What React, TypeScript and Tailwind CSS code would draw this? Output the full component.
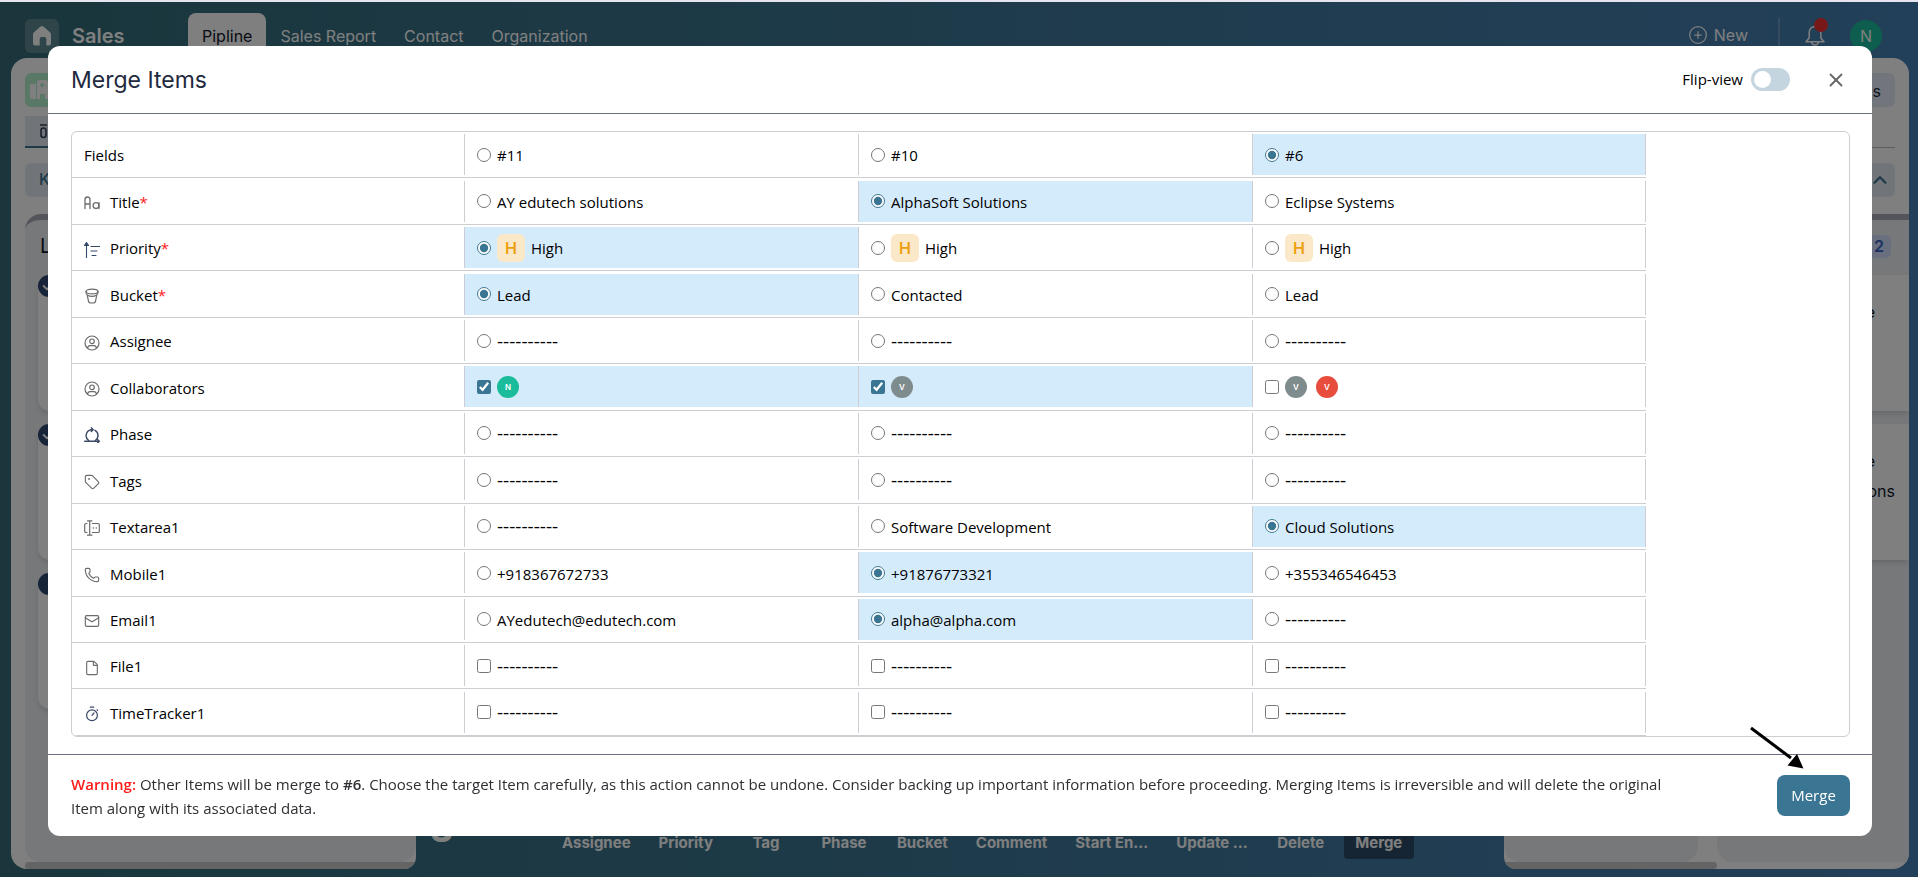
import { ReactNode, useState } from 'react';
import { Check, ChevronUp, CirclePlus, File, Mail, Phone, Tag, X } from 'lucide-react';

type Person = { initial: string; tone: 'green' | 'gray' | 'red' };

type Cell = {
  text?: string;
  priority?: boolean;
  people?: Person[];
};

type Row = {
  name: string;
  required?: boolean;
  icon?: ReactNode;
  type: 'radio' | 'checkbox';
  cells: Cell[];
  selected: number[];
};

const EMPTY = '----------';
const empty: Cell = { text: EMPTY };

const iconProps = {
  width: 16,
  height: 16,
  viewBox: '0 0 16 16',
  fill: 'none',
  strokeLinecap: 'round' as const,
  strokeLinejoin: 'round' as const,
  'aria-hidden': true,
};

const TitleIcon = () => (
  <svg {...iconProps} stroke="#6b6b6b" strokeWidth="1.3">
    <path d="M1 13.500V4.500a2.500 2.500 0 0 1 5 0v9M1 9h5" />
    <circle cx="12" cy="10.600" r="2.900" />
    <path d="M15 7.700v5.800" />
  </svg>
);

const PriorityIcon = () => (
  <svg {...iconProps} stroke="#33496b" strokeWidth="1.1">
    <path d="M2.500 15.500V2" />
    <path d="M.5 3.500 2.500.500l2 3z" fill="#33496b" />
    <path d="M7 4.500h9M7 9h6M8 13.500h4" />
  </svg>
);

const BucketIcon = () => (
  <svg {...iconProps} stroke="#6b6b6b" strokeWidth="1.2">
    <ellipse cx="8" cy="3.500" rx="6" ry="2.400" />
    <path d="M2 3.500c0 2.200.500 3.300 1.500 3.800 2.500 1.300 6.500 1.300 9 0 1-.5 1.500-1.600 1.500-3.800" />
    <path d="m3.300 7.300 1.200 6c.2 1 1.500 1.700 3.500 1.700s3.300-.7 3.500-1.700l1.200-6" />
  </svg>
);

const UserIcon = () => (
  <svg {...iconProps} stroke="#6b6b6b" strokeWidth="1.2">
    <circle cx="8" cy="8" r="7" />
    <circle cx="8" cy="6.300" r="2.300" />
    <path d="M3.500 13.200c.3-1.800 1.300-2.500 2.500-2.500h4c1.200 0 2.200.7 2.500 2.500" />
  </svg>
);

const PhaseIcon = () => (
  <svg {...iconProps} stroke="#3b4a66" strokeWidth="1.4">
    <path d="M.7 14.300H15M13.300 12.300l2 2-2 2" />
    <path d="M4.700 13.500A6 6 0 0 1 7 2.700h1.500M7.300.800l1.900 1.900-1.900 1.900" />
    <path d="M11 3.300a6 6 0 0 1 .3 10.200" />
  </svg>
);

const TextareaIcon = () => (
  <svg {...iconProps} stroke="#6b6b6b" strokeWidth="1.2">
    <path d="M5.700 1v14M3.500.800h4.400M3.500 15.200h4.400" />
    <path d="M3 3.500H2A1.300 1.300 0 0 0 .700 4.800v6.400A1.300 1.300 0 0 0 2 12.500h1" />
    <path d="M8.300 3.500H14a1.300 1.300 0 0 1 1.300 1.300v6.400a1.300 1.300 0 0 1-1.300 1.300H8.300" />
    <path d="M9.300 8h.01M12.300 8h.01" strokeWidth="1.600" />
  </svg>
);

const TimerIcon = () => (
  <svg {...iconProps} stroke="#3b4a66" strokeWidth="1.2">
    <circle cx="8" cy="9.300" r="5.400" />
    <path d="m8 9.300 2-2.300M6.300 1.200h3.400M13 3.800l.6.600" />
  </svg>
);

const grayIcon = 'size-4 text-[#6b6b6b]';

const rows: Row[] = [
  { name: 'Fields', type: 'radio', cells: [{ text: '#11' }, { text: '#10' }, { text: '#6' }], selected: [2] },
  {
    name: 'Title',
    required: true,
    icon: <TitleIcon />,
    type: 'radio',
    cells: [{ text: 'AY edutech solutions' }, { text: 'AlphaSoft Solutions' }, { text: 'Eclipse Systems' }],
    selected: [1],
  },
  {
    name: 'Priority',
    required: true,
    icon: <PriorityIcon />,
    type: 'radio',
    cells: [
      { text: 'High', priority: true },
      { text: 'High', priority: true },
      { text: 'High', priority: true },
    ],
    selected: [0],
  },
  {
    name: 'Bucket',
    required: true,
    icon: <BucketIcon />,
    type: 'radio',
    cells: [{ text: 'Lead' }, { text: 'Contacted' }, { text: 'Lead' }],
    selected: [0],
  },
  { name: 'Assignee', icon: <UserIcon />, type: 'radio', cells: [empty, empty, empty], selected: [] },
  {
    name: 'Collaborators',
    icon: <UserIcon />,
    type: 'checkbox',
    cells: [
      { people: [{ initial: 'N', tone: 'green' }] },
      { people: [{ initial: 'V', tone: 'gray' }] },
      {
        people: [
          { initial: 'V', tone: 'gray' },
          { initial: 'V', tone: 'red' },
        ],
      },
    ],
    selected: [0, 1],
  },
  { name: 'Phase', icon: <PhaseIcon />, type: 'radio', cells: [empty, empty, empty], selected: [] },
  {
    name: 'Tags',
    icon: <Tag className={grayIcon} strokeWidth={1.7} />,
    type: 'radio',
    cells: [empty, empty, empty],
    selected: [],
  },
  {
    name: 'Textarea1',
    icon: <TextareaIcon />,
    type: 'radio',
    cells: [empty, { text: 'Software Development' }, { text: 'Cloud Solutions' }],
    selected: [2],
  },
  {
    name: 'Mobile1',
    icon: <Phone className={grayIcon} strokeWidth={1.7} />,
    type: 'radio',
    cells: [{ text: '+918367672733' }, { text: '+91876773321' }, { text: '+355346546453' }],
    selected: [1],
  },
  {
    name: 'Email1',
    icon: <Mail className={grayIcon} strokeWidth={1.7} />,
    type: 'radio',
    cells: [{ text: 'AYedutech@edutech.com' }, { text: 'alpha@alpha.com' }, empty],
    selected: [1],
  },
  {
    name: 'File1',
    icon: <File className={grayIcon} strokeWidth={1.7} />,
    type: 'checkbox',
    cells: [empty, empty, empty],
    selected: [],
  },
  { name: 'TimeTracker1', icon: <TimerIcon />, type: 'checkbox', cells: [empty, empty, empty], selected: [] },
];

const tones = {
  green: 'bg-[#1abc9c]',
  gray: 'bg-[#7f8c8d]',
  red: 'bg-[#e74c3c]',
};

const actions = [
  'Assignee',
  'Priority',
  'Tag',
  'Phase',
  'Bucket',
  'Comment',
  'Start En...',
  'Update ...',
  'Delete',
  'Merge',
];

function TopBar() {
  const linkStyle = 'mt-[11px] h-12 rounded-t-lg px-3.5 text-base leading-[46px] font-normal';

  return (
    <header className="flex h-14 items-start pl-[25px] pr-9">
      <a href="#home" aria-label="Home" className="mt-[17px] flex size-[34px] items-center justify-center rounded-md bg-white/20">
        <svg width="20" height="20" viewBox="0 0 20 20" fill="white" aria-hidden="true">
          <path d="M8.300.8a2.600 2.600 0 0 1 3.400 0l6 5.200c.8.700 1.300 1.600 1.300 2.600V17a2.500 2.500 0 0 1-2.500 2.500h-2.200V13a2 2 0 0 0-2-2h-2.600a2 2 0 0 0-2 2v6.500H3.500A2.500 2.500 0 0 1 1 17V8.600C1 7.600 1.500 6.700 2.300 6z" />
        </svg>
      </a>
      <span className="ml-[13px] mt-5 w-[116px] text-xl font-semibold text-white">Sales</span>
      <nav className="flex h-14 items-start">
        <a href="#pipline" className={`${linkStyle} bg-white text-slate-900`}>
          Pipline
        </a>
        <a href="#report" className={`${linkStyle} text-white`}>
          Sales Report
        </a>
        <a href="#contact" className={`${linkStyle} text-white`}>
          Contact
        </a>
        <a href="#organization" className={`${linkStyle} text-white`}>
          Organization
        </a>
      </nav>
      <div className="ml-auto flex items-start">
        <button type="button" className="mt-[21px] flex items-center gap-1.5 text-base text-white">
          <CirclePlus className="size-5" strokeWidth={1.5} />
          New
        </button>
        <span className="ml-[30px] mt-4 h-9 w-0.5 bg-white/20" />
        <button type="button" aria-label="Notifications" className="relative ml-6 mt-[22px] text-white">
          <svg width="22" height="22" viewBox="0 0 22 22" fill="none" stroke="currentColor" strokeWidth="1.500" strokeLinejoin="round" aria-hidden="true">
            <path d="M11 2.500c-3.600 0-5.800 2.500-5.800 6V14L2 17.800h18L16.800 14V8.500c0-3.500-2.200-6-5.800-6zM7.500 18c.3 2 1.700 3 3.500 3s3.200-1 3.500-3" />
          </svg>
          <span className="absolute -top-1.5 left-2.5 size-3.5 rounded-full bg-[#f03232]" />
        </button>
        <span className="ml-6 mt-[18px] flex size-8 items-center justify-center rounded-full bg-[#1abc9c] text-base text-white">
          N
        </span>
      </div>
    </header>
  );
}

function TaskStub({ checked }: { checked: boolean }) {
  return (
    <div className="h-[136px] rounded-xl bg-white shadow-md">
      <span className="flex size-[22px] items-center justify-center rounded-full bg-[#2f4670] text-white">
        {checked && <Check className="size-4" strokeWidth={3} />}
      </span>
    </div>
  );
}

function BoardStart() {
  return (
    <section className="flex w-[405px] flex-col overflow-hidden rounded-t-2xl rounded-br-xl rounded-bl-2xl bg-white pl-3.5">
      <div className="mt-[15px] flex size-[34px] items-center justify-center rounded-md bg-[#b4f0cc] text-white">
        <svg width="24" height="22" viewBox="0 0 24 22" fill="currentColor" aria-hidden="true">
          <path d="M0 5h6v15H2a2 2 0 0 1-2-2zM19 8h3a2 2 0 0 1 2 2v10h-5z" />
          <path fillRule="evenodd" d="M10 1h5a3 3 0 0 1 3 3v16h-3v-5h-5v5H7V4a3 3 0 0 1 3-3zm1.500 3v1.500H10V7h1.500v1.500H13V7h1.500V5.500H13V4z" />
        </svg>
      </div>
      <div className="mt-[9px] flex h-8 items-center border-b-2 border-[#3a7593] bg-[#e2eaf2] pl-3.5 text-slate-700">
        <svg width="14" height="16" viewBox="0 0 14 16" fill="none" stroke="currentColor" strokeWidth="1.600" aria-hidden="true">
          <path d="M1 2h7" />
          <rect x="2" y="5" width="5" height="9.500" rx="2.500" />
        </svg>
      </div>
      <div className="mt-[15px] h-[34px] rounded-md bg-[#e2eaf2] pl-3.5 text-base leading-8 font-medium text-[#3a7593]">
        Kanban
      </div>
      <div className="mt-[17px] flex-1 rounded-2xl border-t-6 border-[#a6aab6] bg-[#eef0f4] pl-[13px]">
        <h2 className="h-[55px] pl-0.5 pt-3 text-xl font-normal text-slate-900">Lead</h2>
        <div className="flex flex-col gap-[13px]">
          <TaskStub checked />
          <TaskStub checked />
          <TaskStub checked={false} />
        </div>
      </div>
      <div className="h-[7px] rounded-l bg-[#c8c8c8]" />
    </section>
  );
}

function BoardEnd() {
  return (
    <section className="flex w-[405px] flex-col overflow-hidden rounded-t-2xl rounded-br-2xl rounded-bl-xl bg-white">
      <div className="mr-3.5 mt-[15px] h-[34px] rounded-md bg-[#e4ebf7] pr-3.5 text-right text-base leading-9 text-slate-800">
        Settings
      </div>
      <div className="mr-3.5 mt-[9px] h-8 border-b border-[#bbb]" />
      <div className="mr-3.5 mt-[15px] flex h-[34px] items-center justify-end rounded-md bg-[#e2eaf2] pr-1 text-[#3a7593]">
        <ChevronUp className="size-[22px]" strokeWidth={2.5} />
      </div>
      <div className="mt-[17px] flex flex-1 gap-[19px]">
        <div className="flex-1 rounded-2xl border-t-6 border-[#a6aab6] bg-[#eef0f4]" />
        <div className="w-[192px] rounded-tl-2xl rounded-bl-2xl border-t-6 border-[#a6aab6] bg-[#eef0f4]">
          <div className="flex h-[55px] justify-end pr-[18px] pt-[15px]">
            <span className="h-[23px] rounded-md bg-[#d2dfff] px-[7px] text-base leading-[23px] font-semibold text-[#3562c4]">2</span>
          </div>
          <div className="flex flex-col gap-[13px] text-base leading-[30px] text-slate-900">
            <div className="h-[136px] bg-white pl-[94px] pt-[22px] shadow-md">
              <p className="w-16 text-right">Phase</p>
            </div>
            <div className="h-[136px] bg-white pl-[94px] pt-[22px] shadow-md">
              <p className="w-16 text-right">Phase</p>
              <p className="w-[84px] text-right">Solutions</p>
            </div>
          </div>
        </div>
      </div>
      <div className="h-[7px] w-[213px] rounded-r bg-[#c8c8c8]" />
    </section>
  );
}

function ActionBar() {
  return (
    <div className="flex min-w-0 flex-1 items-end pb-2.5 pl-[14px]">
      <span className="mb-3 w-[122px] text-4xl leading-[36px] font-bold text-white">3</span>
      <div className="flex gap-2">
        {actions.map(action => (
          <button
            key={action}
            type="button"
            className={`h-12 min-w-[70px] rounded px-2.5 pt-4 text-[15px] leading-[18px] font-bold text-white ${
              action === 'Merge' ? 'bg-slate-800/60' : ''
            }`}
          >
            {action}
          </button>
        ))}
      </div>
    </div>
  );
}

function CellContent({ cell }: { cell: Cell }) {
  if (cell.people) {
    return (
      <span className="flex gap-[9px]">
        {cell.people.map((person, i) => (
          <span
            key={i}
            className={`flex size-[22px] items-center justify-center rounded-full font-[Inter,sans-serif] text-[8px] font-semibold text-white ${tones[person.tone]}`}
          >
            {person.initial}
          </span>
        ))}
      </span>
    );
  }

  return (
    <span className="flex items-center gap-[6px]">
      {cell.priority && (
        <span className="flex size-7 items-center justify-center rounded-md bg-[#fbe8c9] font-[Inter,sans-serif] text-base font-semibold text-[#ee9f0e]">
          H
        </span>
      )}
      <span className={cell.text === EMPTY ? 'text-[19px] leading-6' : 'pt-0.5'}>{cell.text}</span>
    </span>
  );
}

function MergeTable() {
  const [selection, setSelection] = useState(rows.map(row => row.selected));

  const toggle = (rowIndex: number, cellIndex: number) => {
    setSelection(prev =>
      prev.map((picked, i) => {
        if (i !== rowIndex) return picked;
        if (rows[i].type === 'radio') return [cellIndex];
        return picked.includes(cellIndex) ? picked.filter(p => p !== cellIndex) : [...picked, cellIndex];
      }),
    );
  };

  return (
    <table className="h-full w-[1574px] table-fixed border-collapse text-[15px] text-black">
      <colgroup>
        <col className="w-[392px]" />
        <col />
        <col />
        <col />
      </colgroup>
      <tbody>
        {rows.map((row, rowIndex) => (
          <tr key={row.name} className="border-b border-[#cdcdd4]">
            <th scope="row" className="pl-3 text-left font-normal">
              <span className="flex items-center gap-2.5 pt-0.5">
                {row.icon && <span className="flex w-4 pt-0.5">{row.icon}</span>}
                <span>
                  {row.name}
                  {row.required && <span className="text-[#ff1a1a]">*</span>}
                </span>
              </span>
            </th>
            {row.cells.map((cell, cellIndex) => {
              const active = selection[rowIndex].includes(cellIndex);
              return (
                <td key={cellIndex} className="py-0.5">
                  <label
                    className={`flex h-[41px] items-center gap-[6px] border-l border-[#cdcdd4] pl-3 ${
                      cellIndex === 2 ? 'border-r' : ''
                    } ${active ? 'bg-[#d4ebfc]' : ''}`}
                  >
                    <input
                      type={row.type}
                      name={row.name}
                      checked={active}
                      onChange={() => toggle(rowIndex, cellIndex)}
                      className="size-3.5 accent-[#3a7593]"
                    />
                    <CellContent cell={cell} />
                  </label>
                </td>
              );
            })}
          </tr>
        ))}
      </tbody>
    </table>
  );
}

function MergeDialog() {
  const [flip, setFlip] = useState(false);

  return (
    <div
      role="dialog"
      aria-labelledby="merge-title"
      className="flex min-w-0 flex-1 flex-col rounded-xl bg-white font-['Open_Sans','Noto_Sans',sans-serif]"
    >
      <div className="flex h-[68px] items-center border-b border-[#6b7080] pl-[23px] pr-[25px]">
        <h1 id="merge-title" className="pt-0.5 font-[Inter,sans-serif] text-[23px] font-normal text-[#1f2a40]">
          Merge Items
        </h1>
        <label className="ml-auto flex items-center gap-2 text-[15px] text-black">
          Flip-view
          <input
            type="checkbox"
            checked={flip}
            onChange={() => setFlip(prev => !prev)}
            className="h-[23px] w-[39px] appearance-none rounded-full bg-[#c4d5df] p-[3px] before:block before:size-[17px] before:rounded-full before:bg-white checked:bg-[#3a7593] checked:before:translate-x-4"
          />
        </label>
        <button type="button" aria-label="Close" className="ml-[35px] text-[#666]">
          <X className="size-[22px]" strokeWidth={2} />
        </button>
      </div>

      <div className="min-h-0 flex-1 py-[17px] pr-[22px] pl-[23px]">
        <div className="h-full overflow-hidden rounded-md border border-[#cdcdd4]">
          <MergeTable />
        </div>
      </div>

      <div className="flex h-[82px] items-center justify-between border-t border-[#6b7080] pl-[23px] pr-[22px]">
        <p className="w-[1600px] text-[15px] leading-6 text-[#2f2f33]">
          <span className="font-semibold text-[#ff1a1a]">Warning:</span> Other Items will be merge to{' '}
          <b className="font-semibold">#6</b>. Choose the target Item carefully, as this action cannot be undone. Consider
          backing up important information before proceeding. Merging Items is irreversible and will delete the original
          Item along with its associated data.
        </p>
        <button type="button" className="relative h-[41px] w-[73px] rounded-lg bg-[#3a7593] text-[15px] text-white">
          Merge
          <svg className="absolute -top-[50px] -left-[29px]" width="58" height="46" viewBox="0 0 58 46" aria-hidden="true">
            <path d="M3 3 43 33" stroke="#000" strokeWidth="3" />
            <path d="M55.500 43.500 39.500 40.500 49 29z" fill="#000" />
          </svg>
        </button>
      </div>
    </div>
  );
}

export default function App() {
  return (
    <div className="flex h-screen flex-col overflow-hidden border-t-2 border-[#e6e4ef] bg-linear-to-r/srgb from-[#346c78] to-[#4680b4] font-[Inter,sans-serif]">
      <TopBar />
      <main className="flex min-h-0 flex-1 px-[9px] pb-2 pl-[11px]">
        <BoardStart />
        <ActionBar />
        <BoardEnd />
      </main>
      <div className="fixed inset-0 top-0.5 flex bg-black/50 pt-11 pr-[46px] pb-[41px] pl-12">
        <MergeDialog />
      </div>
    </div>
  );
}
